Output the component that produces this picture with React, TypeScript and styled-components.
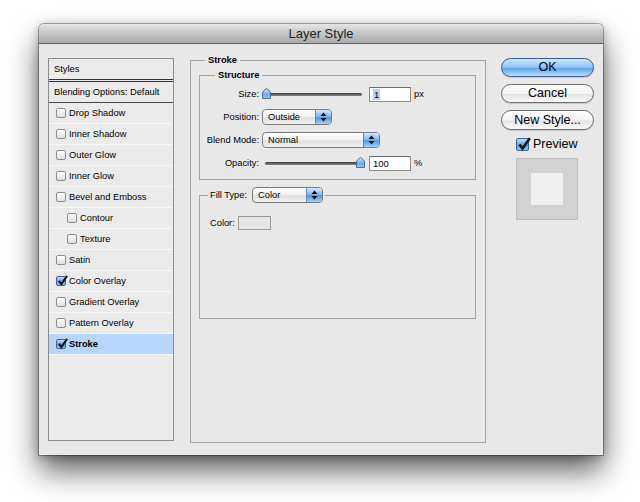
import styled, { createGlobalStyle } from "styled-components";

const GlobalStyle = createGlobalStyle`
  html, body {
    margin: 0;
    padding: 0;
    background: #fff;
  }
  body {
    font-family: "Liberation Sans", Arial, sans-serif;
    color: #000;
  }
`;

const Page = styled.div`
  width: 640px;
  height: 502px;
  box-sizing: border-box;
  padding: 24px 0 0 39px;
  overflow: hidden;
`;

const Window = styled.div`
  width: 564px;
  height: 431px;
  display: flex;
  flex-direction: column;
  background: #e8e8e8;
  border-radius: 5px 5px 0 0;
  box-shadow: 0 0 0 1px rgba(0, 0, 0, 0.3), 0 16px 30px rgba(0, 0, 0, 0.62),
    0 2px 10px rgba(0, 0, 0, 0.28);
`;

const TitleBar = styled.div`
  height: 19px;
  border-bottom: 1px solid #5f5f5f;
  border-radius: 5px 5px 0 0;
  background: linear-gradient(#e6e6e6, #c4c4c4 50%, #a9a9a9);
  font-size: 13px;
  line-height: 20px;
  text-align: center;
  color: #1e1e1e;
`;

const Body = styled.div`
  flex: 1;
  display: flex;
  align-items: flex-start;
  padding: 10px 9px 14px 9px;
  font-size: 9.3px;
`;

/* ---------- styles list ---------- */

const List = styled.div`
  width: 126px;
  height: 383px;
  margin-top: 4px;
  box-sizing: border-box;
  border: 1px solid #8c8c8c;
  background: #ebebeb;
  display: flex;
  flex-direction: column;
`;

const ListHeader = styled.div<{ $double?: boolean }>`
  height: 20px;
  line-height: 20px;
  padding-left: 5px;
  border-bottom: ${(p) => (p.$double ? "3px double #333" : "1px solid #4a4a4a")};
`;

const ListRow = styled.div<{ $indent?: boolean; $selected?: boolean }>`
  height: 20px;
  display: flex;
  align-items: center;
  gap: 3px;
  padding-left: ${(p) => (p.$indent ? 18 : 7)}px;
  border-bottom: 1px solid #f8f8f8;
  background: ${(p) => (p.$selected ? "#b7d6fd" : "transparent")};
  font-weight: ${(p) => (p.$selected ? 700 : 400)};
`;

const Box = styled.span<{ $checked?: boolean; $size: number }>`
  position: relative;
  width: ${(p) => p.$size}px;
  height: ${(p) => p.$size}px;
  box-sizing: border-box;
  border: 1px solid ${(p) => (p.$checked ? "#3d6299" : "#8e8e8e")};
  border-radius: 2px;
  background: ${(p) =>
    p.$checked
      ? "linear-gradient(#bfe0ff, #5d9fe4 55%, #8fc4f5)"
      : "linear-gradient(#ffffff, #dedede)"};
  flex: none;

  svg {
    position: absolute;
    left: 0;
    top: -2px;
  }
`;

const CheckBox = ({ checked, size = 10 }: { checked?: boolean; size?: number }) => (
  <Box $checked={checked} $size={size}>
    {checked && (
      <svg width={size + 1} height={size + 1} viewBox="0 0 12 12">
        <path d="M2 6.5 L4.8 9.8 L11 1" fill="none" stroke="#111" strokeWidth="2.2" />
      </svg>
    )}
  </Box>
);

/* ---------- group boxes ---------- */

const Group = styled.fieldset<{ $pad: number; $inset: number; $h?: number }>`
  margin: 0;
  box-sizing: border-box;
  min-width: 0;
  border: 1px solid #a2a2a2;
  padding: 0 8px 0 ${(p) => p.$pad}px;
  ${(p) => (p.$h ? `height: ${p.$h}px;` : "")}

  legend {
    margin-left: ${(p) => p.$inset}px;
    padding: 0 3px;
    font-weight: 700;
    line-height: 12px;
  }
`;

const Outer = styled(Group)`
  width: 296px;
  margin-left: 16px;
  padding-right: 9px;
`;

const Structure = styled(Group)`
  margin-top: 3px;
  padding-top: 3px;
  padding-bottom: 6px;
`;

const FillGroup = styled(Group)`
  margin-top: 7px;
  padding-top: 13px;

  legend {
    padding: 0 2px;
    font-weight: 400;
    line-height: 16px;
    display: flex;
    align-items: center;
    gap: 5px;
  }
`;

const Grid = styled.div`
  display: grid;
  grid-template-columns: 59px auto;
  grid-auto-rows: 20px;
  row-gap: 3px;
  column-gap: 3px;
  align-items: center;
`;

const Label = styled.span`
  text-align: right;
  white-space: nowrap;
`;

const Control = styled.div`
  display: flex;
  align-items: center;
`;

const SliderWrap = styled.div`
  position: relative;
  width: 103px;
  height: 12px;
  display: flex;
  align-items: center;
`;

const Track = styled.div`
  flex: 1;
  height: 3px;
  margin: 0 3px;
  border-radius: 2px;
  background: linear-gradient(#3c3c3c, #8a8a8a);
`;

const Thumb = styled.svg`
  position: absolute;
  top: 0;
`;

const Slider = ({ pos }: { pos: number }) => (
  <SliderWrap>
    <Track />
    <Thumb width="9" height="11" viewBox="0 0 9 11" style={{ left: `${pos * 94}px` }}>
      <defs>
        <linearGradient id={`tg${pos}`} x1="0" y1="0" x2="0" y2="1">
          <stop offset="0" stopColor="#d6ecff" />
          <stop offset="0.6" stopColor="#6fa9e6" />
          <stop offset="1" stopColor="#9ccbf6" />
        </linearGradient>
      </defs>
      <path
        d="M0.5 10.5 V5 Q0.5 3 4.5 0.6 Q8.5 3 8.5 5 V10.5 Z"
        fill={`url(#tg${pos})`}
        stroke="#3f6391"
        strokeWidth="0.9"
      />
    </Thumb>
  </SliderWrap>
);

const NumInput = styled.div`
  width: 42px;
  height: 15px;
  box-sizing: border-box;
  margin-left: 4px;
  border: 1px solid #8d8d8d;
  border-top-color: #6c6c6c;
  background: #fff;
  padding-left: 3px;
  line-height: 13px;
  font-size: 9.5px;
`;

const Selected = styled.span`
  background: #b4d3fb;
  padding: 0 1px;
`;

const Unit = styled.span`
  margin-left: 3px;
`;

const Popup = styled.div<{ $w: number }>`
  width: ${(p) => p.$w}px;
  height: 16px;
  box-sizing: border-box;
  display: flex;
  border: 1px solid #7c7c7c;
  border-radius: 4px;
  background: linear-gradient(#ffffff, #f1f1f1 50%, #dedede 55%, #f3f3f3);
  font-weight: 400;
  overflow: hidden;
`;

const PopupText = styled.span`
  flex: 1;
  padding-left: 5px;
  line-height: 14px;
`;

const PopupArrows = styled.span`
  width: 15px;
  display: flex;
  align-items: center;
  justify-content: center;
  border-left: 1px solid #5f86bd;
  background: linear-gradient(#d2e8ff, #79b3ee 50%, #4f94e0 55%, #a6d3fb);
`;

const Select = ({ value, width }: { value: string; width: number }) => (
  <Popup $w={width}>
    <PopupText>{value}</PopupText>
    <PopupArrows>
      <svg width="7" height="10" viewBox="0 0 7 10">
        <path d="M0.5 4 L3.5 0.5 L6.5 4 Z M0.5 6 L3.5 9.5 L6.5 6 Z" fill="#111" />
      </svg>
    </PopupArrows>
  </Popup>
);

const ColorRow = styled.div`
  display: flex;
  align-items: center;
  gap: 3px;
  padding-left: 2px;
`;

const Swatch = styled.div`
  width: 33px;
  height: 14px;
  box-sizing: border-box;
  border: 1px solid #9a9a9a;
  background: #e6e6e6;
`;

/* ---------- buttons ---------- */

const Buttons = styled.div`
  width: 93px;
  margin-left: 15px;
  margin-top: 4px;
  display: flex;
  flex-direction: column;
  gap: 7px;
`;

const Button = styled.button<{ $primary?: boolean; $h?: number }>`
  height: ${(p) => p.$h ?? 19}px;
  padding: 0;
  border-radius: 10px;
  border: 1px solid ${(p) => (p.$primary ? "#3a5d93" : "#6e6e6e")};
  background: ${(p) =>
    p.$primary
      ? "linear-gradient(#cfe6fd, #8cc1f3 50%, #5ea5ec 55%, #b9defc)"
      : "linear-gradient(#ffffff, #f4f4f4 50%, #e3e3e3 55%, #fbfbfb)"};
  font-family: "Liberation Sans", Arial, sans-serif;
  font-size: 12.5px;
  line-height: 17px;
  color: #000;
  box-shadow: 0 1px 1px rgba(0, 0, 0, 0.15);
`;

const PreviewRow = styled.div`
  display: flex;
  align-items: center;
  gap: 4px;
  padding-left: 15px;
  font-size: 12.5px;
`;

const PreviewBox = styled.div`
  width: 62px;
  height: 62px;
  margin-left: 15px;
  box-sizing: border-box;
  border: 1px solid #bdbdbd;
  background: #d2d2d2;
  display: flex;
  align-items: center;
  justify-content: center;
`;

const PreviewInner = styled.div`
  width: 32px;
  height: 32px;
  background: #efefef;
`;

const styleRows: { name: string; checked?: boolean; indent?: boolean; selected?: boolean }[] = [
  { name: "Drop Shadow" },
  { name: "Inner Shadow" },
  { name: "Outer Glow" },
  { name: "Inner Glow" },
  { name: "Bevel and Emboss" },
  { name: "Contour", indent: true },
  { name: "Texture", indent: true },
  { name: "Satin" },
  { name: "Color Overlay", checked: true },
  { name: "Gradient Overlay" },
  { name: "Pattern Overlay" },
  { name: "Stroke", checked: true, selected: true },
];

export default function App() {
  return (
    <Page>
      <GlobalStyle />
      <Window>
        <TitleBar>Layer Style</TitleBar>
        <Body>
          <List>
            <ListHeader $double>Styles</ListHeader>
            <ListHeader>Blending Options: Default</ListHeader>
            {styleRows.map((r) => (
              <ListRow key={r.name} $indent={r.indent} $selected={r.selected}>
                <CheckBox checked={r.checked} />
                {r.name}
              </ListRow>
            ))}
          </List>

          <Outer $pad={8} $inset={6} $h={389}>
            <legend>Stroke</legend>
            <Structure $pad={0} $inset={15}>
              <legend>Structure</legend>
              <Grid>
                <Label>Size:</Label>
                <Control>
                  <Slider pos={0} />
                  <NumInput>
                    <Selected>1</Selected>
                  </NumInput>
                  <Unit>px</Unit>
                </Control>
                <Label>Position:</Label>
                <Control>
                  <Select value="Outside" width={70} />
                </Control>
                <Label>Blend Mode:</Label>
                <Control>
                  <Select value="Normal" width={118} />
                </Control>
                <Label>Opacity:</Label>
                <Control>
                  <Slider pos={1} />
                  <NumInput>100</NumInput>
                  <Unit>%</Unit>
                </Control>
              </Grid>
            </Structure>
            <FillGroup $pad={8} $inset={0} $h={132}>
              <legend>
                Fill Type:
                <Select value="Color" width={71} />
              </legend>
              <ColorRow>
                Color:
                <Swatch />
              </ColorRow>
            </FillGroup>
          </Outer>

          <Buttons>
            <Button $primary>OK</Button>
            <Button>Cancel</Button>
            <Button $h={20}>New Style...</Button>
            <PreviewRow>
              <CheckBox checked size={13} />
              Preview
            </PreviewRow>
            <PreviewBox>
              <PreviewInner />
            </PreviewBox>
          </Buttons>
        </Body>
      </Window>
    </Page>
  );
}
